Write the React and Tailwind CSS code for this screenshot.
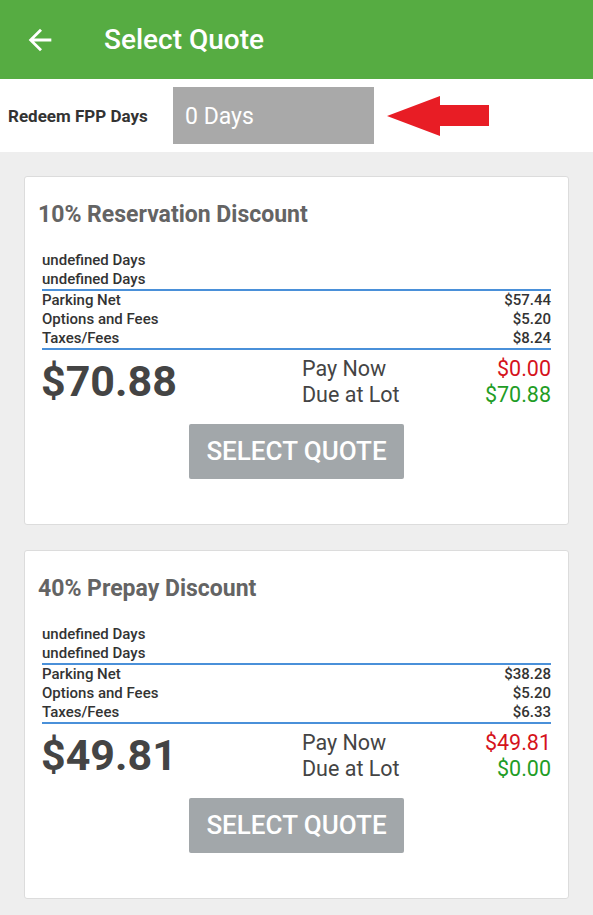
import React from "react";

const quotes = [
  {
    title: "10% Reservation Discount",
    parkingNet: "$57.44",
    options: "$5.20",
    taxes: "$8.24",
    total: "$70.88",
    payNow: "$0.00",
    dueAtLot: "$70.88",
  },
  {
    title: "40% Prepay Discount",
    parkingNet: "$38.28",
    options: "$5.20",
    taxes: "$6.33",
    total: "$49.81",
    payNow: "$49.81",
    dueAtLot: "$0.00",
  },
];

const Row = ({ label, value }) => (
  <div className="flex justify-between leading-[19px]">
    <span>{label}</span>
    <span>{value}</span>
  </div>
);

const QuoteCard = ({ quote }) => (
  <div className="bg-white border border-[#dcdcdc] rounded-[3px] pt-[24px] pb-[45px] px-[17px]">
    <div className="text-[23px] leading-[28px] font-bold text-[#646464] -ml-[4px]">
      {quote.title}
    </div>
    <div className="mt-[21px] text-[15px] font-medium text-[#333]">
      <div className="leading-[20px]">undefined Days</div>
      <div className="leading-[19px] border-b-2 border-[#4a90d9]">undefined Days</div>
      <div className="border-b-2 border-[#4a90d9]">
        <Row label="Parking Net" value={quote.parkingNet} />
        <Row label="Options and Fees" value={quote.options} />
        <Row label="Taxes/Fees" value={quote.taxes} />
      </div>
    </div>
    <div className="flex mt-[6px]">
      <div className="w-[261px] text-[43px] leading-[50px] font-bold text-[#444] -ml-[1px]">
        {quote.total}
      </div>
      <div className="flex-1 text-[21.5px] leading-[26px] text-[#444]">
        <div className="flex justify-between">
          <span>Pay Now</span>
          <span className="text-[#d5131c]">{quote.payNow}</span>
        </div>
        <div className="flex justify-between">
          <span>Due at Lot</span>
          <span className="text-[#1f9d26]">{quote.dueAtLot}</span>
        </div>
      </div>
    </div>
    <div className="flex justify-center mt-[16px]">
      <button className="w-[215px] h-[55px] bg-[#a2a7aa] rounded-[2px] text-white text-[26px] font-medium">
        SELECT QUOTE
      </button>
    </div>
  </div>
);

export default function App() {
  return (
    <div className="min-h-[915px] bg-[#eeeeee] font-['Roboto',sans-serif]">
      <div className="h-[79px] bg-[#56ac42] flex items-center">
        <svg
          className="ml-[23px]"
          width="34"
          height="34"
          viewBox="0 0 24 24"
          fill="white"
        >
          <path d="M20 11H7.83l5.59-5.59L12 4l-8 8 8 8 1.41-1.41L7.83 13H20v-2z" />
        </svg>
        <div className="ml-[47px] text-white text-[28px] font-medium">
          Select Quote
        </div>
      </div>
      <div className="h-[73px] bg-white flex items-center">
        <div className="ml-[8px] w-[165px] text-[17px] font-bold text-[#333] pt-[2px]">
          Redeem FPP Days
        </div>
        <div className="w-[201px] h-[57px] bg-[#a9a9a9] flex items-center px-[12px] pt-[4px] text-white text-[23px]">
          0 Days
        </div>
        <svg className="ml-[13px]" width="102" height="40" viewBox="0 0 102 40">
          <polygon
            points="0,20 53,0 53,9 102,9 102,30 53,30 53,40"
            fill="#e81d25"
          />
        </svg>
      </div>
      <div className="px-[24px] pt-[24px] pb-[18px] flex flex-col gap-[25px]">
        {quotes.map((q, i) => (
          <QuoteCard key={i} quote={q} />
        ))}
      </div>
    </div>
  );
}
